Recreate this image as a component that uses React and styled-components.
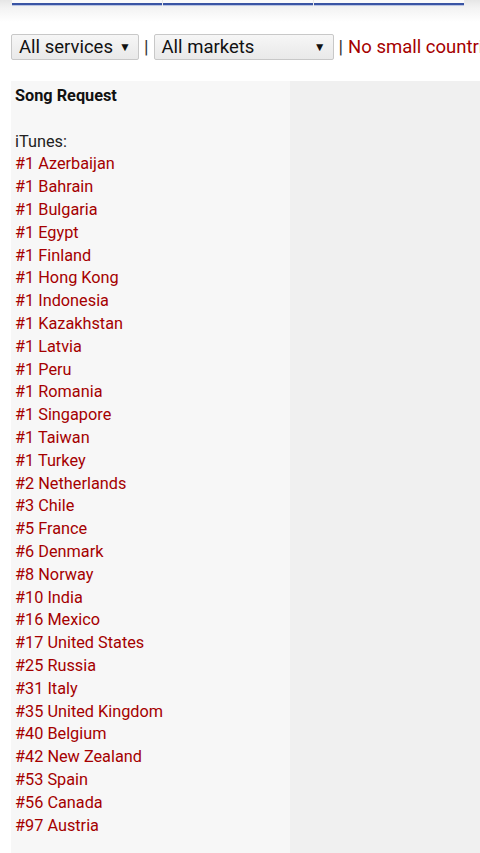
import React from "react";
import styled, { createGlobalStyle } from "styled-components";

const GlobalStyle = createGlobalStyle`
  html, body {
    margin: 0;
    padding: 0;
    background: #fff;
    font-family: Roboto, "Liberation Sans", sans-serif;
    overflow: hidden;
  }
`;

const Page = styled.div`
  width: 480px;
  min-height: 853px;
  background: #fff;
`;

const TopBar = styled.div`
  height: 22px;
  background: linear-gradient(to bottom, #e6e6e6 0px, #f3f3f3 8px, #ffffff 22px);
  display: flex;
  padding-left: 12px;
  gap: 1px;
`;

const Tab = styled.div`
  width: 150px;
  height: 3px;
  background: #fafafa;
  border-bottom: 2px solid #3954a4;
  box-shadow: 0 1px 0 #b9c4e2;
`;

const FilterRow = styled.div`
  display: flex;
  align-items: center;
  padding: 12px 0 0 11px;
  height: 26px;
  white-space: nowrap;
  font-size: 18.5px;
`;

const Select = styled.div`
  flex-shrink: 0;
  box-sizing: border-box;
  width: ${(p) => p.width}px;
  height: 26px;
  display: flex;
  align-items: center;
  justify-content: space-between;
  padding: 0 7px 0 7px;
  border: 1px solid #c8c8c8;
  border-radius: 2px;
  background: linear-gradient(to bottom, #f6f6f6, #e9e9e9);
  color: #111;
  font-size: 18.5px;
`;

const Arrow = styled.span`
  font-size: 12px;
  color: #111;
`;

const Sep = styled.span`
  flex-shrink: 0;
  color: #333;
  padding: 0 5px;
  font-size: 18.5px;
`;

const Filter = styled.span`
  flex-shrink: 0;
  color: #a50000;
`;

const Table = styled.div`
  display: flex;
  margin: 21px 0 0 11px;
  min-height: 772px;
`;

const LeftCell = styled.div`
  width: 279px;
  background: #f7f7f7;
  padding: 4px 0 0 4px;
  box-sizing: border-box;
  font-size: 16.3px;
  line-height: 22.8px;
`;

const RightCell = styled.div`
  flex: 1;
  background: #f0f0f0;
`;

const Title = styled.div`
  font-weight: bold;
  color: #111;
`;

const Blank = styled.div`
  height: 22.8px;
`;

const Label = styled.div`
  color: #222;
`;

const ChartLink = styled.a`
  display: block;
  color: #a50000;
  text-decoration: none;
`;

const charts = [
  ["#1", "Azerbaijan"],
  ["#1", "Bahrain"],
  ["#1", "Bulgaria"],
  ["#1", "Egypt"],
  ["#1", "Finland"],
  ["#1", "Hong Kong"],
  ["#1", "Indonesia"],
  ["#1", "Kazakhstan"],
  ["#1", "Latvia"],
  ["#1", "Peru"],
  ["#1", "Romania"],
  ["#1", "Singapore"],
  ["#1", "Taiwan"],
  ["#1", "Turkey"],
  ["#2", "Netherlands"],
  ["#3", "Chile"],
  ["#5", "France"],
  ["#6", "Denmark"],
  ["#8", "Norway"],
  ["#10", "India"],
  ["#16", "Mexico"],
  ["#17", "United States"],
  ["#25", "Russia"],
  ["#31", "Italy"],
  ["#35", "United Kingdom"],
  ["#40", "Belgium"],
  ["#42", "New Zealand"],
  ["#53", "Spain"],
  ["#56", "Canada"],
  ["#97", "Austria"],
];

export default function App() {
  return (
    <Page>
      <GlobalStyle />
      <TopBar>
        <Tab />
        <Tab />
        <Tab />
      </TopBar>
      <FilterRow>
        <Select width={128}>
          All services <Arrow>▼</Arrow>
        </Select>
        <Sep>|</Sep>
        <Select width={180}>
          All markets <Arrow>▼</Arrow>
        </Select>
        <Sep>|</Sep>
        <Filter>No small countries</Filter>
      </FilterRow>
      <Table>
        <LeftCell>
          <Title>Song Request</Title>
          <Blank />
          <Label>iTunes:</Label>
          {charts.map(([pos, country]) => (
            <ChartLink key={country} href="#">
              {pos} {country}
            </ChartLink>
          ))}
        </LeftCell>
        <RightCell />
      </Table>
    </Page>
  );
}
